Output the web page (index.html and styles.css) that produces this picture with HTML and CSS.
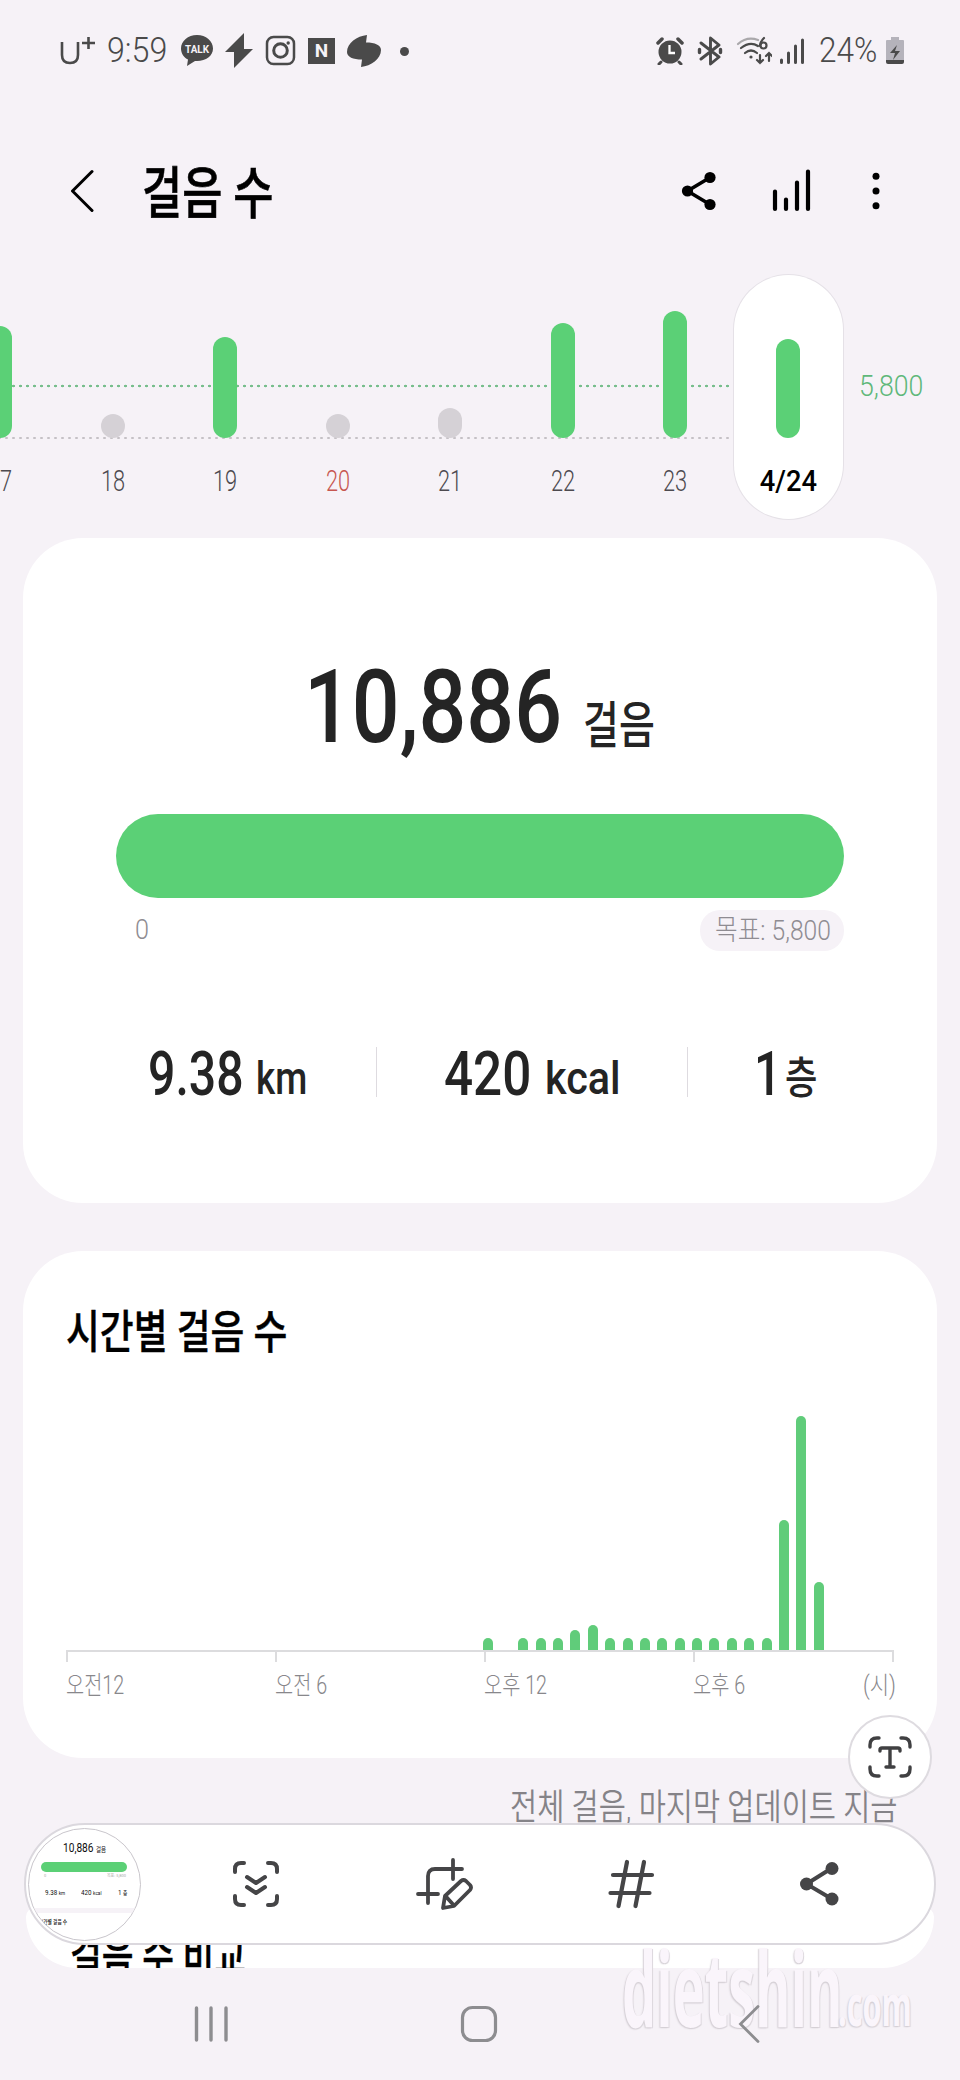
FILE: index.html
```html
<!DOCTYPE html>
<html lang="ko">
<head>
<meta charset="utf-8">
<title>걸음 수</title>
<link rel="stylesheet" href="styles.css">
</head>
<body>
<div class="screen">
  <div class="status">
    <div class="status-left">
      <svg class="carrier" width="36" height="32" viewBox="0 0 36 32"><path d="M2 7V20Q2 28 10 28T18 20V7M22 8H35M28.500 2V14" fill="none" stroke="#4a4a4a" stroke-width="2.600"/></svg>
      <span class="box clock"><span class="txt">9:59</span></span>
      <svg class="ic-talk" width="34" height="34" viewBox="0 0 34 34"><path d="M17 1C8 1 1 7 1 14.500c0 5 3 9 7 11L7 32l8-5h2c9 0 16-5 16-12.500S26 1 17 1z" fill="#4a4a4a"/><text x="17" y="19" text-anchor="middle" textLength="24" lengthAdjust="spacingAndGlyphs" class="talk-label">TALK</text></svg>
      <svg class="ic-bolt" width="30" height="36" viewBox="0 0 30 36"><path d="M20 0L1 19h9v16L29 16H20z" fill="#4a4a4a"/></svg>
      <svg class="ic-insta" width="32" height="32" viewBox="0 0 32 32" fill="none" stroke="#4a4a4a" stroke-width="2.500"><rect x="2" y="2" width="27" height="27" rx="6.500"/><circle cx="15.500" cy="15.500" r="6.800" stroke-width="3"/><circle cx="23.200" cy="8" r="1.700" fill="#4a4a4a" stroke="none"/></svg>
      <span class="ic-n">N</span>
      <svg class="ic-blob" width="36" height="34" viewBox="0 0 36 34"><path d="M21 1C11 2 1 9 1 18c0 5 6 7.500 15 7.500L15 33c10-1 20-8 20-17 0-5-6-7.500-15-7.500z" fill="#4a4a4a"/></svg>
      <span class="dot"></span>
    </div>
    <div class="status-right">
      <svg width="28" height="28" viewBox="0 0 28 28"><circle cx="14" cy="15" r="11.500" fill="#4a4a4a"/><path d="M2 6l4-4M22 2l4 4" stroke="#4a4a4a" stroke-width="3.500" stroke-linecap="round"/><path d="M5 25l-2 2M23 25l2 2" stroke="#4a4a4a" stroke-width="3" stroke-linecap="round"/><path d="M13.500 8v8H19" fill="none" stroke="#fff" stroke-width="2.300"/></svg>
      <svg class="ic-bt" width="26" height="30" viewBox="0 0 26 30" fill="none" stroke="#4a4a4a" stroke-width="2.900" stroke-linejoin="round" stroke-linecap="round"><path d="M4 7l18 14-8.500 7V2L22 9 4 23"/><path d="M2.500 13.500v3M23.500 13.500v3" stroke-width="3.400"/></svg>
      <svg class="ic-wifi" width="36" height="30" viewBox="0 0 36 30" fill="none" stroke="#4a4a4a" stroke-width="2.200" stroke-linecap="round"><path d="M2 8Q11 0 22 4" stroke="#aaa8ab"/><path d="M5 12Q14 5 22 10M9 17Q15 12 21 17"/><circle cx="15" cy="21" r="1.600" fill="#4a4a4a" stroke="none"/><path d="M28 2Q24 6 24 10"/><circle cx="27.500" cy="9.500" r="3"/><path d="M24 19v8M21 24l3 3 3-3M33 25v-8M30 20l3-3 3 3" stroke-width="2.200"/></svg>
      <svg class="ic-sig" width="26" height="28" viewBox="0 0 26 28" stroke="#4a4a4a" stroke-width="3" stroke-linecap="round"><path d="M2.500 23v2.500M9.500 16v9.500M16.500 9v16.500M23.500 3v22.500"/></svg>
      <span class="box batt-text"><span class="txt">24%</span></span>
      <svg class="ic-batt" width="20" height="28" viewBox="0 0 20 28"><path d="M6 0h8v4H6z M2 3h16q1 0 1 1v19H1V4q0-1 1-1z" fill="#b5b3bb"/><path d="M1 23h18v2q0 2-2 2H3q-2 0-2-2z" fill="#4a4a4a"/><path d="M12 8l-7 8h5l-2 7 7-9h-5z" fill="#4a4a4a"/></svg>
    </div>
  </div>

  <header class="header">
    <svg class="back" width="24" height="44" viewBox="0 0 24 44"><path d="M22 2.500L2.500 22 22 41.500" fill="none" stroke="#000" stroke-width="3" stroke-linecap="round" stroke-linejoin="round"/></svg>
    <h1 class="title"><span class="txt">걸음 수</span></h1>
    <svg class="h-share" width="36" height="40" viewBox="0 0 36 40"><path d="M29 6.500L6.500 20 29 33.500" fill="none" stroke="#000" stroke-width="3.600"/><circle cx="29" cy="6.500" r="5.600"/><circle cx="6.500" cy="20" r="5.600"/><circle cx="29" cy="33.500" r="5.600"/></svg>
    <svg class="h-chart" width="40" height="44" viewBox="0 0 40 44"><path d="M3 22.500V40M14 30.500V40M25 13.500V40M36 2.500V40" stroke="#000" stroke-width="4.200" stroke-linecap="round"/></svg>
    <svg class="h-more" width="8" height="38" viewBox="0 0 8 38"><circle cx="4" cy="4.300" r="3.500"/><circle cx="4" cy="19" r="3.500"/><circle cx="4" cy="33.700" r="3.500"/></svg>
  </header>

  <section class="days">
    <div class="dots dots-goal"></div>
    <div class="dots dots-base"></div>
    <div class="day"><div class="slot"><i class="bar" style="height:112px"></i></div><span class="txt">17</span></div>
    <div class="day"><div class="slot"><i class="bar low" style="height:24px"></i></div><span class="txt">18</span></div>
    <div class="day"><div class="slot"><i class="bar" style="height:101px"></i></div><span class="txt">19</span></div>
    <div class="day sun"><div class="slot"><i class="bar low" style="height:24px"></i></div><span class="txt">20</span></div>
    <div class="day"><div class="slot"><i class="bar low" style="height:30px"></i></div><span class="txt">21</span></div>
    <div class="day"><div class="slot"><i class="bar" style="height:115px"></i></div><span class="txt">22</span></div>
    <div class="day"><div class="slot"><i class="bar" style="height:127px"></i></div><span class="txt">23</span></div>
    <div class="day today"><div class="slot"><i class="bar" style="height:99px"></i></div><span class="txt">4/24</span></div>
    <div class="goal"><span class="txt">5,800</span></div>
  </section>

  <section class="card summary">
    <div class="steps">
      <span class="box steps-num"><span class="txt">10,886</span></span>
      <span class="box steps-unit"><span class="txt">걸음</span></span>
    </div>
    <div class="progress"></div>
    <div class="scale">
      <span class="zero"><span class="txt">0</span></span>
      <span class="target"><span class="txt">목표: 5,800</span></span>
    </div>
    <div class="stats">
      <div class="stat s1"><span class="box num"><span class="txt">9.38</span></span><span class="box unit"><span class="txt">km</span></span></div>
      <div class="stat s2"><span class="box num"><span class="txt">420</span></span><span class="box unit"><span class="txt">kcal</span></span></div>
      <div class="stat s3"><span class="box num"><span class="txt">1</span></span><span class="box unit ko"><span class="txt">층</span></span></div>
    </div>
  </section>

  <section class="card hourly">
    <h2><span class="txt">시간별 걸음 수</span></h2>
    <div class="plot">
      <i style="height:12px;grid-column:25"></i><i style="height:12px;grid-column:27"></i><i style="height:12px;grid-column:28"></i><i style="height:12px;grid-column:29"></i><i style="height:20px;grid-column:30"></i><i style="height:25px;grid-column:31"></i><i style="height:12px;grid-column:32"></i><i style="height:12px;grid-column:33"></i><i style="height:12px;grid-column:34"></i><i style="height:12px;grid-column:35"></i><i style="height:12px;grid-column:36"></i><i style="height:12px;grid-column:37"></i><i style="height:12px;grid-column:38"></i><i style="height:12px;grid-column:39"></i><i style="height:12px;grid-column:40"></i><i style="height:12px;grid-column:41"></i><i style="height:130px;grid-column:42"></i><i style="height:234px;grid-column:43"></i><i style="height:68px;grid-column:44"></i>
    </div>
    <div class="axis"><b></b><b></b><b></b><b></b></div>
    <div class="hours">
      <span><span class="txt">오전12</span></span><span><span class="txt">오전 6</span></span><span><span class="txt">오후 12</span></span><span><span class="txt">오후 6</span></span><span class="end"><span class="txt">(시)</span></span>
    </div>
  </section>

  <p class="note"><span class="txt">전체 걸음, 마지막 업데이트 지금</span></p>

  <section class="compare"><h2><span class="txt">걸음 수 비교</span></h2></section>

  <nav class="nav">
    <svg width="36" height="38" viewBox="0 0 36 38" stroke="#8d8d90" stroke-width="3.400" stroke-linecap="round"><path d="M3.500 3v32M18 3v32M33 3v32"/></svg>
    <svg class="nav-home" width="38" height="38" viewBox="0 0 38 38" fill="none" stroke="#8d8d90" stroke-width="3.200"><rect x="2.500" y="2.500" width="33" height="33" rx="10"/></svg>
    <svg class="nav-back" width="22" height="40" viewBox="0 0 22 40" fill="none" stroke="#8d8d90" stroke-width="2.800" stroke-linecap="round"><path d="M20 2.500L2.500 20 20 37.500"/></svg>
  </nav>

  <div class="watermark"><span class="wm-main"><span class="txt">dietshin</span></span><span class="wm-com"><span class="txt">.com</span></span></div>

  <div class="toolbar">
    <div class="thumb">
      <div class="th-steps"><span class="txt">10,886 <small>걸음</small></span></div>
      <div class="th-bar"></div>
      <div class="th-scale"><span>0</span><span>목표: 5,800</span></div>
      <div class="th-stats"><span class="txt">9.38 <small>km</small></span><span class="txt">420 <small>kcal</small></span><span class="txt">1 <small>층</small></span></div>
      <div class="th-gap"></div>
      <div class="th-title"><span class="txt">시간별 걸음 수</span></div>
    </div>
    <svg class="tb" width="50" height="50" viewBox="0 0 50 50" fill="none" stroke="#454547" stroke-width="4" stroke-linecap="round" stroke-linejoin="round"><path d="M13 4h-3Q4 4 4 10v3M37 4h3q6 0 6 6v3M13 46h-3q-6 0-6-6v-3M37 46h3q6 0 6-6v-3M16 18l9 6 9-6M16 28l9 6 9-6"/></svg>
    <svg class="tb" width="58" height="56" viewBox="0 0 58 56" fill="none" stroke="#454547" stroke-width="3.800" stroke-linecap="round" stroke-linejoin="round"><path d="M13 47V20Q13 13 20 13H47M38 4V23M3 38H23"/><path d="M28 52l2-12 16-15q2.500-2 5 0l4 4q2 2.500 0 5L39 50zM30.500 40l8.500 9.500"/></svg>
    <svg class="tb" width="48" height="50" viewBox="0 0 48 50" fill="none" stroke="#454547" stroke-width="4.200" stroke-linecap="round"><path d="M20 3l-8.500 44M37 3l-8.500 44M6 16h39M3.500 34h39"/></svg>
    <svg class="tb" width="42" height="46" viewBox="0 0 42 46"><path d="M34 7L8.500 23 34 38" fill="none" stroke="#454547" stroke-width="4"/><circle cx="34" cy="7.500" r="6.500" fill="#454547"/><circle cx="8.500" cy="23" r="6.500" fill="#454547"/><circle cx="34" cy="38" r="6.500" fill="#454547"/></svg>
  </div>
  <div class="fab"><svg width="46" height="46" viewBox="0 0 46 46" fill="none" stroke="#404042" stroke-width="3.400" stroke-linecap="round" stroke-linejoin="round"><path d="M12 4h-2Q3 4 3 11v2M34 4h2q7 0 7 7v2M12 42h-2q-7 0-7-7v-2M34 42h2q7 0 7-7v-2M13 17v-1q0-2 2-2h16q2 0 2 2v1M23 14v19M19 33h8"/></svg></div>
</div>
</body>
</html>
```
FILE: styles.css
```css
* { box-sizing: border-box; }
body { margin: 0; background: #f6f2f7; font-family: Roboto, "Noto Sans CJK KR", sans-serif; color: #242424; }
.screen { position: relative; width: 960px; height: 2080px; overflow: hidden; background: #f6f2f7; display: flex; flex-direction: column; }
.screen > * { flex-shrink: 0; }
svg { display: block; flex: none; }
h1, h2, p { margin: 0; font-weight: 500; }
.txt { display: inline-block; white-space: nowrap; transform: scaleX(var(--sx, .78)); transform-origin: 0 50%; }
.box { display: block; flex: none; }

/* status bar */
.status { height: 100px; padding: 2px 55px 0 60px; display: flex; align-items: center; justify-content: space-between; color: #4a4a4a; }
.status-left, .status-right { display: flex; align-items: center; }
.clock { width: 61px; margin-left: 11px; font-size: 35px; line-height: 40px; font-weight: 300; --sx: .92; }
.ic-talk { margin-left: 12px; }
.talk-label { font: 700 11px Roboto, sans-serif; fill: #f6f2f7; }
.ic-bolt { margin-left: 10px; }
.ic-insta { margin-left: 11px; }
.ic-n { width: 27px; height: 26px; margin-left: 11px; background: #4a4a4a; color: #f6f2f7; font: 700 19px/26px Roboto, sans-serif; text-align: center; }
.ic-blob { margin-left: 11px; }
.dot { width: 9px; height: 9px; margin-left: 18px; border-radius: 50%; background: #4a4a4a; }
.ic-bt { margin-left: 13px; }
.ic-wifi { margin-left: 13px; }
.ic-sig { margin-left: 7px; }
.batt-text { width: 60px; margin-left: 14px; font-size: 35px; line-height: 40px; font-weight: 300; --sx: .9; }
.ic-batt { margin-left: 6px; }

/* title row */
.header { height: 175px; padding: 6px 80px 0 70px; display: flex; align-items: center; }
.title { width: 538px; margin-left: 48px; padding-top: 6px; font-size: 56px; line-height: 60px; color: #000; -webkit-text-stroke: .6px #000; --sx: .78; }
.h-share { margin-left: 21px; }
.h-chart { margin-left: 55px; }
.h-more { margin-left: 60px; }

/* daily strip */
.days { position: relative; height: 244px; margin-left: -56px; display: flex; }
.dots { position: absolute; left: 56px; width: 731px; height: 4px; background: radial-gradient(circle, #76bd8b 1.100px, transparent 1.600px) 3px 0 / 7px 4px; }
.dots-goal { top: 109px; }
.dots-base { top: 161px; background-image: radial-gradient(circle, #c5c1c6 1px, transparent 1.500px); }
.day { position: relative; width: 112.500px; flex: none; display: flex; flex-direction: column; align-items: center; color: #4d4a4f; font-size: 29px; line-height: 32px; font-weight: 350; }
.day .txt { margin-top: 27px; transform-origin: 50% 50%; --sx: .75; }
.slot { height: 163px; display: flex; align-items: flex-end; }
.bar { width: 24px; border-radius: 12px; background: #5bd076; }
.bar.low { background: #d5d1d6; }
.sun { color: #c75750; }
.today { width: 109px; margin: 0 1px 0 2px; border-radius: 55px; background: #fff; box-shadow: 0 0 0 1px #e5e1e7; color: #000; font-weight: 500; }
.today .txt { --sx: .94; }
.goal { padding: 95px 0 0 15px; font-size: 29px; line-height: 32px; color: #5fb87a; font-weight: 300; --sx: .92; }

/* cards */
.card { margin: 0 23px; background: #fff; border-radius: 60px; }
.summary { height: 665px; margin-top: 19px; padding-top: 109px; }
.steps { height: 123px; padding-left: 281px; display: flex; }
.steps-num { width: 279px; font-size: 102px; line-height: 120px; font-weight: 500; --sx: .825; }
.steps-unit { padding-top: 51px; font-size: 50px; line-height: 56px; font-weight: 500; --sx: .78; }
.progress { height: 84px; margin: 44px 93px 0; border-radius: 42px; background: #5bd076; }
.scale { margin: 12px 93px 0; height: 41px; display: flex; justify-content: space-between; color: #8f8c92; font-size: 28px; line-height: 40px; font-weight: 300; }
.zero { padding-left: 19px; --sx: .9; }
.target { width: 144px; padding-left: 15px; border-radius: 20px; background: #f6f2f7; line-height: 42px; --sx: .88; }
.stats { margin-top: 96px; display: flex; }
.stat { height: 50px; display: flex; line-height: 54px; font-weight: 500; }
.stat + .stat { border-left: 1px solid #dedbe0; }
.num { font-size: 61px; --sx: .79; }
.unit { font-size: 46px; line-height: 62px; --sx: .8; }
.s1 { width: 353px; padding-left: 125px; }
.s1 .num { width: 108px; }
.s2 { width: 311px; padding-left: 67px; }
.s2 .num { width: 101px; --sx: .84; }
.s2 .unit { --sx: .9; }
.s3 { padding-left: 66px; }
.s3 .num { width: 31px; }
.s3 .unit { font-size: 44px; line-height: 64px; }

.hourly { height: 507px; margin-top: 48px; padding: 51px 43px 0; }
h2 { font-size: 46px; line-height: 60px; color: #000; -webkit-text-stroke: .4px #000; --sx: .8; }
.plot { height: 288px; display: grid; grid-template-columns: repeat(48, 17.400px); align-items: end; }
.plot i { width: 10px; border-radius: 5px 5px 0 0; background: #60cc7a; }
.axis { width: 828px; height: 12px; border: 2px solid #dcdcde; border-bottom: 0; display: flex; }
.axis b { width: 209px; flex: none; border-right: 2px solid #dcdcde; }
.axis b:last-child { width: 0; border: 0; }
.hours { display: flex; margin-top: 6px; color: #88878b; font-size: 25px; line-height: 36px; font-weight: 300; --sx: .79; }
.hours > span { width: 209px; flex: none; }
.hours > .end { margin-left: -39px; width: 38px; --sx: .84; }

.note { height: 150px; padding: 30px 0 0 510px; color: #858388; font-size: 36px; line-height: 40px; font-weight: 350; --sx: .82; }
.compare { height: 60px; margin: 0 26px; padding: 19px 0 0 44px; border-radius: 10px 10px 60px 60px; background: #fff; overflow: hidden; }
.compare h2 { font-size: 48px; --sx: .72; }

.nav { position: relative; z-index: 1; height: 112px; padding: 0 0 0 193px; display: flex; align-items: center; }
.nav-home { margin-left: 231px; }
.nav-back { margin-left: 240px; }

/* floating layers */
.watermark { position: absolute; left: 622px; top: 1932px; display: flex; font-family: "Open Sans", Roboto, sans-serif; color: #faf5fb; text-shadow: -2px 1px 2px #d3ced4, 2px 1px 1px #ddd8de; font-weight: 700; }
.wm-main { width: 216px; font-size: 104px; line-height: 110px; --sx: .52; }
.wm-com { width: 76px; padding-top: 37px; font-size: 58px; line-height: 70px; --sx: .53; }
.toolbar { position: absolute; z-index: 2; left: 24px; top: 1823px; width: 912px; height: 122px; border: 2px solid #dbd8de; border-radius: 61px; background: #fff; display: flex; align-items: center; }
.toolbar .tb:nth-child(2) { margin-left: 90px; margin-right: 134px; }
.toolbar .tb:nth-child(3) { margin-right: 134px; }
.toolbar .tb:nth-child(4) { margin-right: 143px; }
.thumb { width: 113px; height: 113px; margin-left: 2px; flex: none; border: 1px solid #c9c6cc; border-radius: 50%; overflow: hidden; color: #111; background: #fff; font-weight: 400; }
.th-steps { margin-top: 11px; padding-left: 34px; font-size: 13px; line-height: 15px; --sx: .78; }
.th-steps small { font-size: 7px; }
.th-bar { height: 10px; margin: 4px 13px 0 12px; border-radius: 5px; background: #5bd076; }
.th-scale { display: flex; justify-content: space-between; margin: 1px 14px 0 15px; font-size: 4px; line-height: 6px; color: #aaa; }
.th-stats { display: flex; justify-content: space-between; margin: 9px 10px 0 16px; font-size: 8px; line-height: 10px; }
.th-stats small { font-size: 6px; }
.th-gap { height: 5px; margin-top: 10px; background: #f6f2f7; }
.th-title { margin-top: 5px; padding-left: 10px; font-size: 6px; line-height: 8px; font-weight: 500; }
.fab { position: absolute; z-index: 3; left: 848px; top: 1715px; width: 84px; height: 84px; border: 2px solid #dedbe0; border-radius: 50%; background: #fff; display: flex; align-items: center; justify-content: center; }
```
